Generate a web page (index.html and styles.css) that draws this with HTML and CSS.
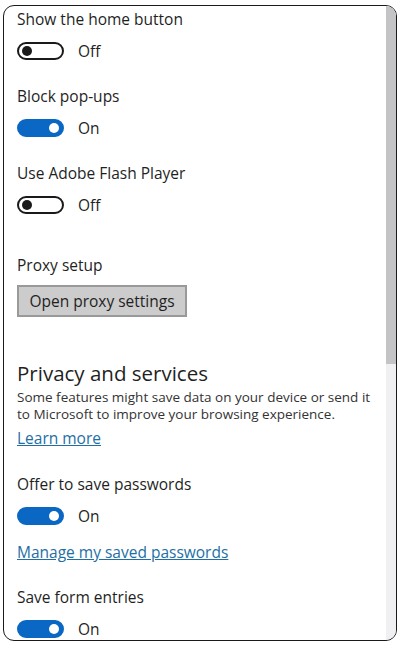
FILE: index.html
```html
<!DOCTYPE html>
<html lang="en">
<head>
  <meta charset="UTF-8" />
  <title>Advanced settings</title>
  <meta name="viewport" content="width=device-width, initial-scale=1.0"/>
  <link rel="stylesheet" href="styles.css">
</head>
<body>
  <div class="frame">
    <div class="pane">
      <div class="setting">
        <div class="label">Show the home button</div>
        <div class="switch-row">
          <span class="switch"><span class="knob"></span></span>
          <span class="state">Off</span>
        </div>
      </div>

      <div class="setting">
        <div class="label">Block pop-ups</div>
        <div class="switch-row">
          <span class="switch on"><span class="knob"></span></span>
          <span class="state">On</span>
        </div>
      </div>

      <div class="setting">
        <div class="label">Use Adobe Flash Player</div>
        <div class="switch-row">
          <span class="switch"><span class="knob"></span></span>
          <span class="state">Off</span>
        </div>
      </div>

      <div class="setting proxy">
        <div class="label">Proxy setup</div>
        <button class="proxy-btn">Open proxy settings</button>
      </div>

      <h2 class="heading">Privacy and services</h2>
      <p class="desc">Some features might save data on your device or send it to Microsoft to improve your browsing experience.</p>
      <a class="link learn" href="#">Learn more</a>

      <div class="setting">
        <div class="label">Offer to save passwords</div>
        <div class="switch-row">
          <span class="switch on"><span class="knob"></span></span>
          <span class="state">On</span>
        </div>
      </div>
      <a class="link manage" href="#">Manage my saved passwords</a>

      <div class="setting">
        <div class="label">Save form entries</div>
        <div class="switch-row">
          <span class="switch on"><span class="knob"></span></span>
          <span class="state">On</span>
        </div>
      </div>
    </div>
    <div class="scrollbar">
      <div class="thumb"></div>
    </div>
  </div>
</body>
</html>
```

FILE: styles.css
```css
body {
  margin: 0;
  background-color: #fff;
  font-family: "Open Sans", "Noto Sans", sans-serif;
  color: #1f1f1f;
}
.frame {
  display: flex;
  margin: 5px 3px 0 3px;
  height: 636px;
  border: 1.5px solid #1a1a1a;
  border-radius: 11px;
  overflow: hidden;
  box-sizing: border-box;
}
.pane {
  flex: 1;
  padding: 3px 0 0 13px;
  overflow: hidden;
}
.scrollbar {
  width: 10px;
  background-color: #f0eff1;
}
.thumb {
  height: 358px;
  background-color: #c4c3c5;
}
.setting {
  margin-top: 26px;
}
.setting:first-child {
  margin-top: 0;
}
.label {
  font-size: 15.5px;
  line-height: 20px;
}
.switch-row {
  display: flex;
  align-items: center;
  gap: 14px;
  margin-top: 13px;
  height: 18px;
}
.switch {
  display: flex;
  align-items: center;
  width: 47px;
  height: 18px;
  border: 2px solid #1a1a1a;
  border-radius: 10px;
  box-sizing: border-box;
  padding: 0 3px;
}
.switch .knob {
  width: 10px;
  height: 10px;
  border-radius: 50%;
  background-color: #1a1a1a;
}
.switch.on {
  background-color: #0a68c4;
  border-color: #0a68c4;
  justify-content: flex-end;
}
.switch.on .knob {
  background-color: #fff;
}
.state {
  font-size: 15.5px;
  line-height: 20px;
}
.proxy {
  margin-top: 41px;
}
.proxy-btn {
  display: block;
  margin-top: 10px;
  width: 170px;
  height: 32px;
  padding: 0;
  font-family: inherit;
  font-size: 15.5px;
  color: #1f1f1f;
  background-color: #cccccc;
  border: 2px solid #999;
}
.heading {
  margin: 42px 0 0 0;
  font-size: 20.5px;
  font-weight: normal;
  line-height: 28px;
}
.desc {
  margin: 2px 0 0 0;
  font-size: 13.5px;
  line-height: 17px;
  color: #333;
  padding-right: 4px;
}
.link {
  display: block;
  font-size: 15.5px;
  line-height: 20px;
  color: #1d6fa5;
  text-decoration: underline;
}
.learn {
  margin-top: 5px;
}
.manage {
  margin-top: 17px;
}
.manage + .setting {
  margin-top: 25px;
}
```
